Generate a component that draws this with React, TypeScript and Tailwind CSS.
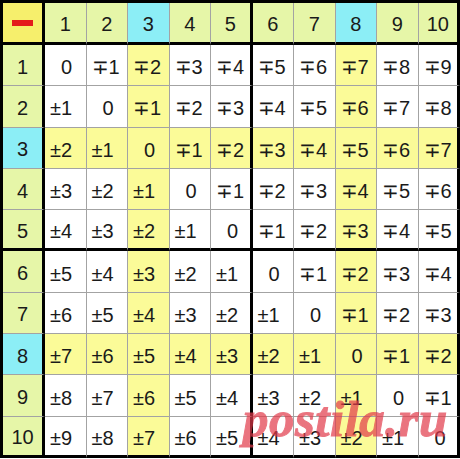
import React from "react";

const N = 10;
const hl = (i: number) => i === 3 || i === 8;

function rightBorder(c: number) {
  return c === 0 || c === 5 || c === 10 ? "border-r-[3px] border-r-black" : "border-r border-r-[#a3a3a3]";
}
function bottomBorder(r: number) {
  return r === 0 || r === 5 || r === 10 ? "border-b-[3px] border-b-black" : "border-b border-b-[#a3a3a3]";
}

export default function App() {
  const cells: React.ReactNode[] = [];
  for (let r = 0; r <= N; r++) {
    for (let c = 0; c <= N; c++) {
      const borders = `${rightBorder(c)} ${bottomBorder(r)}`;
      if (r === 0 && c === 0) {
        cells.push(
          <div key={`${r}-${c}`} className={`${borders} flex items-center justify-center bg-[#f6ef6c]`}>
            <div className="h-[6px] w-[21px] bg-[#e41b1b]" />
          </div>
        );
      } else if (r === 0 || c === 0) {
        const n = r === 0 ? c : r;
        cells.push(
          <div
            key={`${r}-${c}`}
            className={`${borders} flex items-center justify-center pt-[3px] ${hl(n) ? "bg-[#8ceef6]" : "bg-[#e6f6a8]"}`}
          >
            {n}
          </div>
        );
      } else {
        const d = c - r;
        const text = d === 0 ? "0" : d > 0 ? `∓${d}` : `±${-d}`;
        const bg = hl(r) || hl(c) ? "bg-[#fbfb98]" : "bg-white";
        cells.push(
          <div
            key={`${r}-${c}`}
            className={`${borders} ${bg} flex items-center pt-[4px] ${d === 0 ? "pl-[16px]" : "pl-[5px]"}`}
          >
            {text}
          </div>
        );
      }
    }
  }
  return (
    <div className="relative h-[459px] w-[460px] overflow-hidden bg-white">
      <div
        className="grid h-[458px] w-[460px] grid-cols-[42px_repeat(10,minmax(0,1fr))] grid-rows-[42px_repeat(10,minmax(0,1fr))] border-l-[3px] border-t-[3px] border-black text-[20px] leading-none text-[#1a1a1a]"
        style={{ fontFamily: '"Liberation Sans", Arial, sans-serif' }}
      >
        {cells}
      </div>
      <div
        className="pointer-events-none absolute left-[243px] top-[394px] text-[51px] font-bold italic leading-none tracking-[0.5px] text-[#e23a4a] opacity-70"
        style={{ fontFamily: '"Liberation Serif", "Times New Roman", serif', WebkitTextStroke: "1px #e23a4a" }}
      >
        postila.ru
      </div>
    </div>
  );
}
